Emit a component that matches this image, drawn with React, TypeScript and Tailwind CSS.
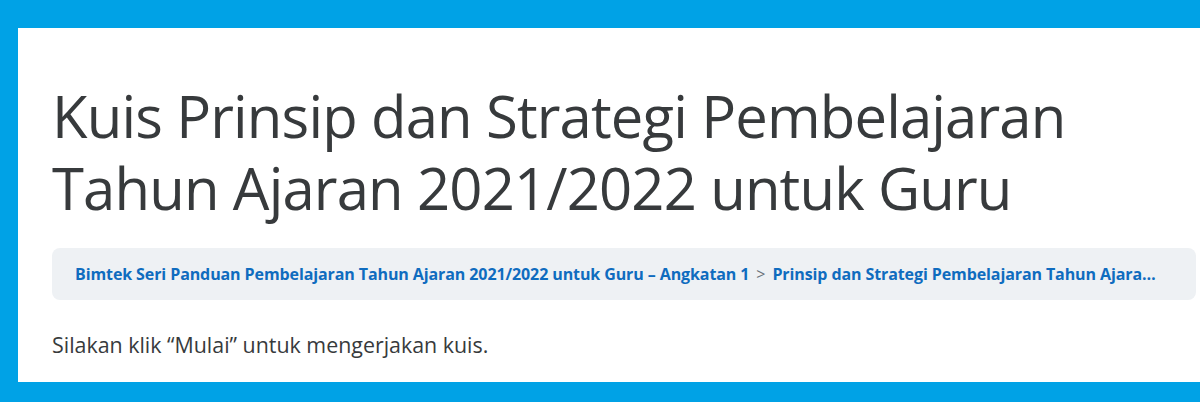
import React from 'react';

const font = { fontFamily: '"Open Sans", "Noto Sans", sans-serif' };

const crumbs = [
  'Bimtek Seri Panduan Pembelajaran Tahun Ajaran 2021/2022 untuk Guru – Angkatan 1',
  'Prinsip dan Strategi Pembelajaran Tahun Ajaran 2021/2022 untuk Guru',
];

const App: React.FC = () => {
  return (
    <div className="w-[1200px] h-[402px] bg-[#00a2e6] pt-[28px] pl-[18px] pb-[20px] overflow-hidden">
      <div className="h-full bg-white pl-[34px] pr-[4px] pt-[52px]" style={font}>
        <h1 className="text-[58px] leading-[72px] font-normal text-[#373a3c] tracking-[-0.85px]">
          Kuis Prinsip dan Strategi Pembelajaran
          <br />
          Tahun Ajaran 2021/2022 untuk Guru
        </h1>

        {/* breadcrumb */}
        <nav className="mt-[24px] h-[52px] bg-[#eef1f4] rounded-lg flex items-center pl-[23px] pr-[40px]">
          <ol className="flex items-center min-w-0 text-[16px] font-bold text-[#0f6cbf] whitespace-nowrap tracking-[-0.1px]">
            <li className="shrink-0">
              <a href="#">{crumbs[0]}</a>
            </li>
            <li className="px-[7px] text-[#6a737b] font-normal shrink-0">&gt;</li>
            <li className="min-w-0 overflow-hidden text-ellipsis">
              <a href="#">{crumbs[1]}</a>
            </li>
          </ol>
        </nav>

        <p className="mt-[30px] text-[21.4px] leading-[30px] text-[#373a3c]">
          Silakan klik “Mulai” untuk mengerjakan kuis.
        </p>
      </div>
    </div>
  );
};

export default App;
